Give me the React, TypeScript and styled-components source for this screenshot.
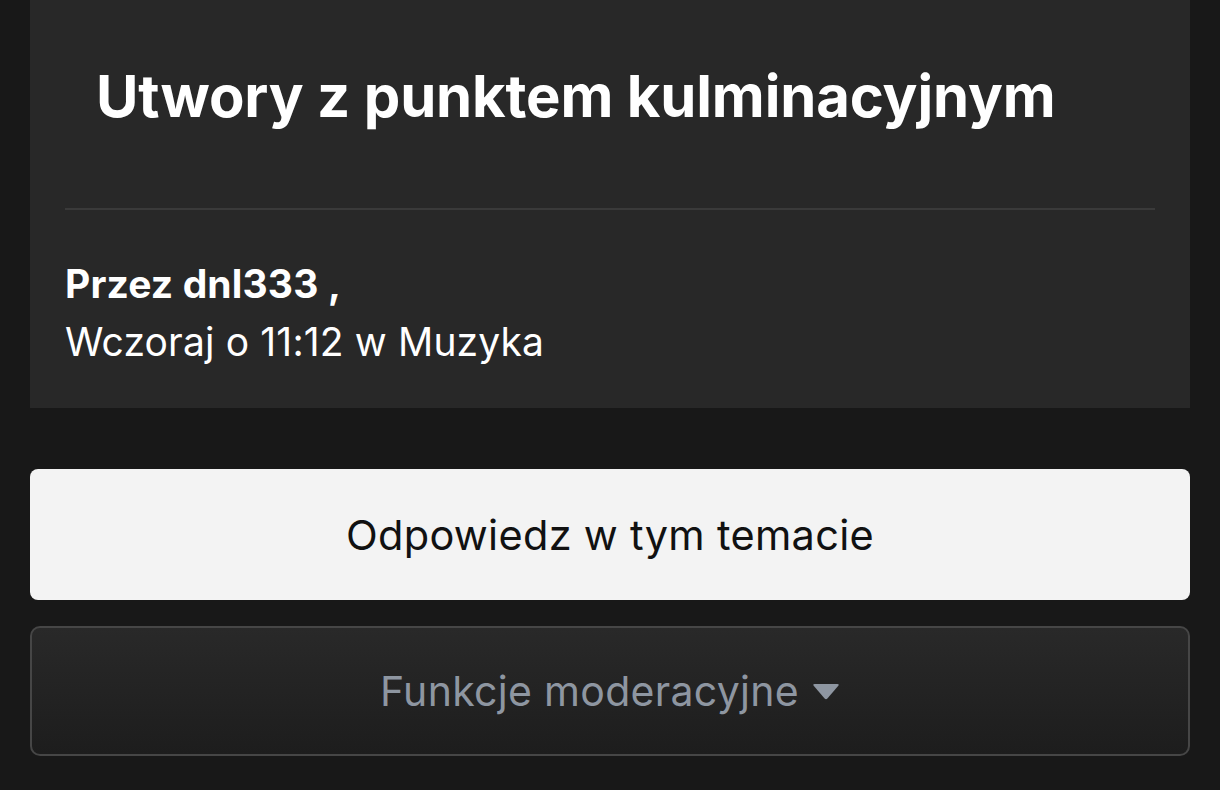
import React from "react";
import styled, { createGlobalStyle } from "styled-components";

const Global = createGlobalStyle`
  html, body { margin: 0; padding: 0; background: #181818; }
  body { font-family: Inter, "Noto Sans", sans-serif; -webkit-font-smoothing: antialiased; }
  * { box-sizing: border-box; }
`;

const Page = styled.div`
  width: 1220px;
  height: 790px;
  padding: 0 30px;
  display: flex;
  flex-direction: column;
  overflow: hidden;
`;

const Panel = styled.section`
  background: #282828;
  padding: 0 35px;
  height: 408px;
  display: flex;
  flex-direction: column;
`;

const Title = styled.h1`
  margin: 0;
  padding: 60px 0 0 31px;
  height: 208px;
  font-size: 58px;
  line-height: 72px;
  font-weight: 700;
  color: #ffffff;
  letter-spacing: -0.15px;
`;

const Divider = styled.hr`
  margin: 0;
  border: 0;
  height: 2px;
  background: #3a3a3a;
`;

const Meta = styled.div`
  padding-top: 45px;
  color: #ffffff;
  font-size: 39px;
  line-height: 58px;
  letter-spacing: 0.15px;
`;

const Author = styled.div`
  font-weight: 700;
`;

const Actions = styled.div`
  margin-top: 61px;
  display: flex;
  flex-direction: column;
  gap: 26px;
`;

const Button = styled.button<{ $variant: "primary" | "secondary" }>`
  height: ${(p) => (p.$variant === "primary" ? "131px" : "130px")};
  width: 100%;
  border-radius: ${(p) => (p.$variant === "primary" ? "8px" : "10px")};
  font-family: Inter, "Noto Sans", sans-serif;
  font-size: ${(p) => (p.$variant === "primary" ? "41.5px" : "41px")};
  font-weight: 400;
  display: flex;
  align-items: center;
  justify-content: center;
  gap: 13px;
  letter-spacing: 0.3px;
  cursor: pointer;
  ${(p) =>
    p.$variant === "primary"
      ? `background: #f3f3f3; color: #111111; border: 0;`
      : `background: linear-gradient(#292929, #1d1d1d); color: #8e96a1; border: 2px solid #464646;`}
`;

const Caret = () => (
  <svg width="28" height="20" viewBox="0 0 28 20" aria-hidden style={{ marginTop: 2 }}>
    <path d="M2.5 2 H25.5 Q27.6 2 26.3 3.8 L15.4 16.6 Q14 18 12.6 16.6 L1.7 3.8 Q0.4 2 2.5 2 Z" fill="#8e96a1" />
  </svg>
);

export default function App() {
  return (
    <>
      <Global />
      <Page>
        <Panel>
          <Title>Utwory z punktem kulminacyjnym</Title>
          <Divider />
          <Meta>
            <Author>Przez dnl333 ,</Author>
            <div>Wczoraj o 11:12 w Muzyka</div>
          </Meta>
        </Panel>
        <Actions>
          <Button $variant="primary">Odpowiedz w tym temacie</Button>
          <Button $variant="secondary">
            Funkcje moderacyjne
            <Caret />
          </Button>
        </Actions>
      </Page>
    </>
  );
}
